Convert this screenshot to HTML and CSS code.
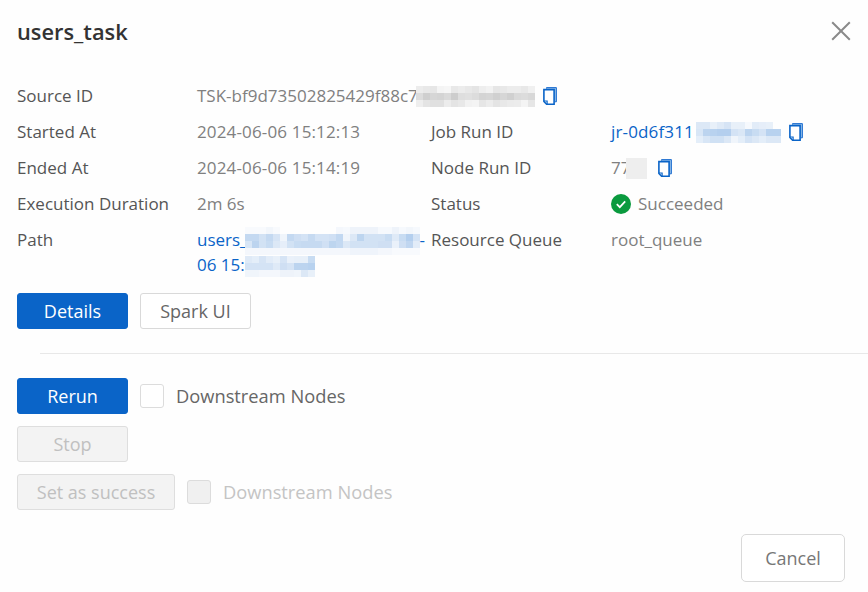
FILE: index.html
```html
<!DOCTYPE html>
<html lang="en">
<head>
<meta charset="utf-8">
<title>users_task</title>
<link rel="stylesheet" href="styles.css">
</head>
<body>
<svg class="defs" width="0" height="0" aria-hidden="true">
  <symbol id="copy" viewBox="0 0 14 18">
    <path d="M3.5 1.6V.6h9.9v14.2h-1.7" fill="#8fbbe8" stroke="#1f6fd0" stroke-width="1"/>
    <path d="M.9 2.6h10.2v14.6H3.6L.9 14.5z" fill="#fff" stroke="#0a64c8" stroke-width="1.6"/>
    <path d="M.9 14h3.2v3.2" fill="none" stroke="#0a64c8" stroke-width="1.2"/>
  </symbol>
</svg>
<main class="dialog">
  <header class="head">
    <h1 class="title">users_task</h1>
    <svg class="close" viewBox="0 0 20 20" aria-label="Close"><path d="M1.2 1.2l17.6 17.6M18.8 1.2L1.2 18.8" stroke="#8a8a8a" stroke-width="2" fill="none"/></svg>
  </header>
  <section class="info">
    <div class="label">Source ID</div>
    <div class="value wide">TSK-bf9d73502825429f88c7<span class="mask m1"></span><svg class="copy"><use href="#copy"/></svg></div>
    <div class="label">Started At</div>
    <div class="value num">2024-06-06 15:12:13</div>
    <div class="label">Job Run ID</div>
    <div class="value"><a class="link num">jr-0d6f311</a><span class="mask m2"></span><svg class="copy"><use href="#copy"/></svg></div>
    <div class="label">Ended At</div>
    <div class="value num">2024-06-06 15:14:19</div>
    <div class="label">Node Run ID</div>
    <div class="value">77<span class="mask m3"></span><svg class="copy c3"><use href="#copy"/></svg></div>
    <div class="label">Execution Duration</div>
    <div class="value">2m 6s</div>
    <div class="label">Status</div>
    <div class="value"><svg class="ok" viewBox="0 0 20 20"><circle cx="10" cy="10" r="10" fill="#0a9a3e"/><path d="M5.8 10.2l3 3 5.4-5.8" stroke="#fff" stroke-width="1.7" fill="none"/></svg>Succeeded</div>
    <div class="label">Path</div>
    <div class="value path"><a class="link">users_<span class="mask m4"></span>-<br>06 15:<span class="mask m5"></span></a></div>
    <div class="label">Resource Queue</div>
    <div class="value">root_queue</div>
  </section>
  <div class="row r1">
    <button class="btn primary">Details</button>
    <button class="btn">Spark UI</button>
  </div>
  <hr class="rule">
  <div class="row">
    <button class="btn primary">Rerun</button>
    <label class="check"><span class="box"></span><span class="check-text">Downstream Nodes</span></label>
  </div>
  <div class="row r3">
    <button class="btn disabled">Stop</button>
  </div>
  <div class="row r3">
    <button class="btn disabled success">Set as success</button>
    <label class="check off"><span class="box"></span><span class="check-text">Downstream Nodes</span></label>
  </div>
  <footer class="foot"><button class="btn cancel">Cancel</button></footer>
</main>
</body>
</html>
```
FILE: styles.css
```css
* { box-sizing: border-box; }
html, body { margin: 0; padding: 0; }
body {
  width: 868px;
  height: 592px;
  overflow: hidden;
  background: #fefefe;
  font-family: "Open Sans", "Noto Sans", sans-serif;
  font-size: 17px;
  color: #555;
}
.defs { position: absolute; }
.dialog { display: flex; flex-direction: column; padding: 0 23px 10px 17px; height: 592px; }
.head { display: flex; justify-content: space-between; align-items: center; height: 64px; flex: none; }
.title { margin: 0; font-size: 21.8px; font-weight: 600; color: #333; line-height: 30px; }
.close { width: 20px; height: 20px; margin-top: -2px; margin-right: -6px; }
.info {
  display: grid;
  grid-template-columns: 180px 234px 180px 1fr;
  margin-top: 14px;
  line-height: 24px;
  white-space: nowrap;
}
.label, .value { display: flex; align-items: center; height: 36px; }
.label { color: #555; }
.value { color: #808080; }
.num { letter-spacing: .15px; }
.wide { grid-column: 2 / 5; }
.path { display: block; padding-top: 6px; height: 54px; }
.link { color: #0a64c8; }
.mask {
  display: inline-block;
  vertical-align: middle;
  background-repeat: no-repeat;
  background-color: transparent;
}
.m1 {
  width: 119px;
  height: 21px;
  margin-left: -2px;
  background-size: 100% 7px;
  background-position: 0 0, 0 7px, 0 14px;
  background-image:
    linear-gradient(90deg, #ececec 0 7px, #e8e8e8 0 14px, #e6e6e6 0 21px, #f4f4f4 0 28px, #f6f6f6 0 35px, #e8e8e8 0 42px, #ececec 0 49px, #e8e8e8 0 56px, #e4e4e4 0 63px, #eeeeee 0 70px, #f2f2f2 0 77px, #e6e6e6 0 84px, #e8e8e8 0 91px, #ececec 0 98px, #ececec 0 105px, #e8e8e8 0 112px, #f0f0f0 0 119px),
    linear-gradient(90deg, #dcdcdc 0 7px, #cfcfcf 0 14px, #d6d6d6 0 21px, #d4d4d4 0 28px, #dadada 0 35px, #cdcdcd 0 42px, #dedede 0 49px, #e0e0e0 0 56px, #dcdcdc 0 63px, #d4d4d4 0 70px, #d6d6d6 0 77px, #d0d0d0 0 84px, #d6d6d6 0 91px, #d0d0d0 0 98px, #dadada 0 105px, #dcdcdc 0 112px, #d8d8d8 0 119px),
    linear-gradient(90deg, #eeeeee 0 7px, #e4e4e4 0 14px, #e0e0e0 0 21px, #e0e0e0 0 28px, #ececec 0 35px, #e4e4e4 0 42px, #e8e8e8 0 49px, #f2f2f2 0 56px, #f4f4f4 0 63px, #e6e6e6 0 70px, #ececec 0 77px, #e4e4e4 0 84px, #e8e8e8 0 91px, #ebebeb 0 98px, #ececec 0 105px, #f4f4f4 0 112px, #e6e6e6 0 119px);
}
.m2 {
  width: 85px;
  height: 21px;
  margin-left: 2px;
  background-size: 100% 7px;
  background-position: 0 0, 0 7px, 0 14px;
  background-image:
    linear-gradient(90deg, #dce8f6 0 7px, #dce8f6 0 14px, #e8f0f9 0 21px, #dfeaf7 0 28px, #d6e4f5 0 35px, #e8f0f9 0 42px, #e8f0f9 0 49px, #f6f9fd 0 56px, #e2ecf8 0 63px, #e6eef9 0 70px, #e8f0f9 0 77px, #fefefe 0 85px),
    linear-gradient(90deg, #d8e6f6 0 7px, #bcd4ef 0 14px, #b8d2ef 0 21px, #b4cfee 0 35px, #d4e3f5 0 42px, #dae7f6 0 49px, #bcd4ef 0 56px, #c8dcf2 0 63px, #d4e3f5 0 70px, #b8d2ef 0 85px),
    linear-gradient(90deg, #e4eef9 0 7px, #d8e6f6 0 14px, #d0e1f4 0 28px, #dce8f6 0 35px, #f0f5fb 0 42px, #e4eef9 0 49px, #d4e3f5 0 56px, #dce8f6 0 63px, #e4eef9 0 70px, #dce8f6 0 85px);
}
.m3 { width: 21px; height: 21px; margin-left: -4px; background-color: #eeeeee; }
.m4 {
  width: 175px;
  height: 28px;
  margin: -2px 0 -2px -3px;
  background-size: 100% 7px;
  background-position: 0 0, 0 7px, 0 14px, 0 21px;
  background-image:
    linear-gradient(90deg, #f8fafd 0 21px, #f2f6fb 0 28px, #f8fafd 0 35px, #fefefe 0 91px, #f4f7fc 0 98px, #f6f9fd 0 105px, #eef3fa 0 133px, #f6f9fd 0 147px, #eef3fa 0 154px, #f6f9fd 0 161px, #f2f6fb 0 168px, #f6f9fd 0 175px),
    linear-gradient(90deg, #c4d9f1 0 14px, #d2e2f4 0 21px, #c4d9f1 0 28px, #d6e4f5 0 35px, #f0f5fb 0 42px, #c4d9f1 0 49px, #cfdff3 0 56px, #d4e3f5 0 63px, #c6daf1 0 70px, #d4e3f5 0 84px, #d0e0f4 0 91px, #c2d8f1 0 98px, #f0f5fb 0 105px, #dce8f6 0 112px, #bdd5ef 0 119px, #d2e2f4 0 140px, #c8dcf2 0 147px, #dfeaf7 0 154px, #c8dcf2 0 161px, #b4cfee 0 168px, #d4e3f5 0 175px),
    linear-gradient(90deg, #d8e6f6 0 7px, #bcd4ef 0 14px, #d2e2f4 0 21px, #c8dcf2 0 28px, #dce8f6 0 35px, #e6eef9 0 42px, #d2e2f4 0 49px, #c8dcf2 0 56px, #c6daf1 0 77px, #d0e0f4 0 84px, #bdd5ef 0 91px, #c4d9f1 0 98px, #dce8f6 0 105px, #d2e2f4 0 133px, #cfdff3 0 147px, #eaf1fa 0 154px, #cfdff3 0 161px, #c0d6f0 0 168px, #e2ecf8 0 175px),
    linear-gradient(90deg, #f4f7fc 0 105px, #eff4fb 0 133px, #f4f7fc 0 147px, #f8fafd 0 175px);
}
.m5 {
  width: 70px;
  height: 21px;
  margin: -2px 0;
  background-size: 100% 7px;
  background-position: 0 0, 0 7px, 0 14px;
  background-image:
    linear-gradient(90deg, #dfeaf7 0 7px, #e4eef9 0 14px, #d6e4f5 0 21px, #e2ecf8 0 28px, #e8f0f9 0 35px, #d6e4f5 0 42px, #eaf1fa 0 49px, #e8f0f9 0 63px, #c8dcf2 0 70px),
    linear-gradient(90deg, #d4e3f5 0 28px, #dfeaf7 0 35px, #cfdff3 0 42px, #d6e4f5 0 49px, #bcd4ef 0 63px, #b8d2ef 0 70px),
    linear-gradient(90deg, #f0f5fb 0 14px, #f4f7fc 0 35px, #eef3fa 0 49px, #f0f5fb 0 56px, #dce8f6 0 63px, #e8f0f9 0 70px);
}
.copy { width: 14px; height: 18px; margin-left: 8px; flex: none; }
.c3 { margin-left: 11px; }
.ok { width: 20px; height: 20px; margin-right: 7px; flex: none; }
.row { display: flex; align-items: center; gap: 12px; flex: none; }
.r1 { margin-top: 17px; }
.r3 { margin-top: 12px; }
.btn {
  width: 111px;
  height: 36px;
  padding: 0;
  border: 1px solid #d9d9d9;
  border-radius: 3px;
  background: #fff;
  color: #666;
  font: inherit;
  font-size: 18px;
}
.primary { background: #0a64c8; border-color: #0a64c8; color: #fff; }
.disabled { background: #f3f3f3; border-color: #dedede; color: #c0c0c0; }
.success { width: 158px; }
.check { display: flex; align-items: center; font-size: 18.3px; color: #666; }
.check-text { padding-bottom: 2px; }
.box { width: 24px; height: 24px; margin-right: 12px; border: 1px solid #dcdcdc; border-radius: 3px; background: #fff; }
.off { color: #c4c4c4; }
.off .box { background: #f0f0f0; }
.rule { width: 828px; height: 1px; margin: 24px -23px 24px 23px; border: 0; background: #e8e8e8; }
.foot { display: flex; justify-content: flex-end; margin-top: 24px; }
.cancel { width: 104px; height: 48px; color: #777; border-radius: 5px; }
```
